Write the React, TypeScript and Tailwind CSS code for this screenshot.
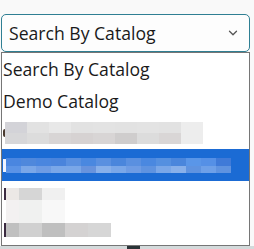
import { ChevronDown } from 'lucide-react'

const font = { fontFamily: '"Open Sans", "Noto Sans", sans-serif' }

function Blur({ rows, w, h }: { rows: string[][]; w: number[]; h: number[] }) {
  return (
    <div className="flex flex-col">
      {rows.map((r, i) => (
        <div key={i} className="flex">
          {r.map((c, j) => (
            <div key={j} style={{ width: w[j % w.length], height: h[i], background: c }} />
          ))}
        </div>
      ))}
    </div>
  )
}

export default function App() {
  return (
    <div className="w-[254px] h-[249px] bg-[#f9f9f9] overflow-hidden text-[#1a1a1a]" style={font}>
      <div className="pt-[14px] pl-[1px] w-[250px]">
        <div className="h-[38px] flex items-center justify-between pl-[7px] pr-[9px] border border-[#2f7f93] rounded-[5px] bg-[#fdfdfd] text-[17.6px]">
          <span>Search By Catalog</span>
          <ChevronDown className="w-[14px] h-[14px] text-[#555]" strokeWidth={2.2} />
        </div>
        <div className="h-[194px] border border-[#767676] bg-white text-[17.6px] flex flex-col">
          <div className="h-[32px] shrink-0 flex items-center pl-[1px]">Search By Catalog</div>
          <div className="h-[32px] shrink-0 flex items-center pl-[1px]">Demo Catalog</div>
          <div className="h-[32px] shrink-0 flex items-center pl-[1px] gap-[0px]">
            <div className="w-[2px] h-[8px] bg-[#4a3a30] rounded-l-full" />
            <Blur
              w={[22]}
              h={[11, 11]}
              rows={[
                ['#d3d3d8', '#e2e2e2', '#e8e8e8', '#e2e2e2', '#e3e3e3', '#e2e2e2', '#e3e3e3', '#e2e2e2', '#ededed'],
                ['#d7d7d9', '#dcdcdc', '#d8d5d5', '#d6d2d2', '#d8d5d5', '#cfcdcd', '#dcdcdc', '#d9d6d6', '#ededed'],
              ]}
            />
          </div>
          <div className="h-[32px] shrink-0 flex items-center pl-[1px] bg-[#1b6bd4]">
            <div className="w-[3px] h-[13px] bg-[#f0f4ff]" />
            <Blur
              w={[15]}
              h={[8, 7]}
              rows={[
                ['#4a86e0', '#4f88dc', '#4a86df', '#4a84dc', '#5a90e0', '#4a88e0', '#5a90e0', '#4a86dc', '#5a90e0', '#4a88e0', '#5590e0', '#4a86dc', '#5a96e8', '#5590e6', '#3f7ad8'],
                ['#5b93e6', '#7aa7e8', '#6e9ce4', '#7aa7e8', '#7aa7e8', '#6893dd', '#88b0ea', '#7aa7e8', '#6e9ce4', '#5f93e0', '#7aa7e8', '#88b0ea', '#5f93e0', '#6ea0e8', '#5f93e0'],
              ]}
            />
          </div>
          <div className="pt-[7px] pl-[2px] flex">
            <div className="flex flex-col">
              <div className="w-[2px] h-[12px] bg-[#3a2a40] mt-[0px]" />
              <div className="w-[2px] h-[23px]" />
              <div className="w-[2px] h-[14px] bg-[#3a2a40]" />
            </div>
            <Blur
              w={[13, 23, 23, 23, 23]}
              h={[12, 23, 14]}
              rows={[
                ['#ece8e6', '#d6d6d6', '#f0f0f0'],
                ['#f3f1f1', '#f0f1f0', '#f8f8f8'],
                ['#c0c0c0', '#d0d0d0', '#bfbfbf', '#d4d2d2', '#d6d6d6'],
              ]}
            />
          </div>
        </div>
      </div>
      <div className="h-[4px] bg-[#d3dadb] flex">
        <div className="ml-[127px] w-[13px] bg-[#2a3438]" />
      </div>
    </div>
  )
}
